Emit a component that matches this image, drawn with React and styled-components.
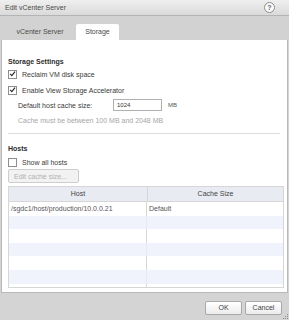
import React from "react";
import styled, { createGlobalStyle } from "styled-components";

const GlobalStyle = createGlobalStyle`
  html, body {
    margin: 0;
    padding: 0;
    background: #d4d4d4;
  }
  body {
    font-family: "Liberation Sans", Arial, sans-serif;
    font-size: 7px;
    color: #3a3a3a;
  }
`;

const rows = [
  { host: "/sgdc1/host/production/10.0.0.21", size: "Default" },
  {},
  {},
  {},
  {},
  {},
  {},
];

const Check = ({ checked }) => (
  <Box>
    {checked ? (
      <svg width="8" height="8" viewBox="0 0 8 8">
        <path d="M1.3 3.8 L3.2 5.9 L6.9 1.2" fill="none" stroke="#2b2b2b" strokeWidth="1.3" />
      </svg>
    ) : null}
  </Box>
);

const App = () => {
  return (
    <>
      <GlobalStyle />
      <Dialog>
        <TitleBar>
          <span>Edit vCenter Server</span>
          <Help>?</Help>
        </TitleBar>
        <Tabs>
          <Tab>vCenter Server</Tab>
          <Tab active>Storage</Tab>
        </Tabs>
        <Panel>
          <Heading>Storage Settings</Heading>
          <CheckRow top={1}>
            <Check checked />
            <span>Reclaim VM disk space</span>
          </CheckRow>
          <CheckRow top={4}>
            <Check checked />
            <span>Enable View Storage Accelerator</span>
          </CheckRow>
          <FieldRow>
            <Label>Default host cache size:</Label>
            <Input>1024</Input>
            <Unit>MB</Unit>
          </FieldRow>
          <Note>Cache must be between 100 MB and 2048 MB</Note>
          <Rule />
          <Heading>Hosts</Heading>
          <CheckRow top={2}>
            <Check />
            <span>Show all hosts</span>
          </CheckRow>
          <Disabled>Edit cache size...</Disabled>
          <Table>
            <HeadRow>
              <HeadCell>Host</HeadCell>
              <HeadCell>Cache Size</HeadCell>
            </HeadRow>
            <Body>
              {rows.map((r, i) => (
                <Row key={i} striped={i % 2 === 1}>
                  <Cell>{r.host}</Cell>
                  <Cell>{r.size}</Cell>
                </Row>
              ))}
            </Body>
          </Table>
        </Panel>
        <Footer>
          <Button>OK</Button>
          <Button>Cancel</Button>
          <Grip>
            <svg width="5" height="5" viewBox="0 0 5 5">
              <rect x="4" y="0" width="1" height="1" fill="#8a8a8a" />
              <rect x="2" y="2" width="1" height="1" fill="#8a8a8a" />
              <rect x="4" y="2" width="1" height="1" fill="#8a8a8a" />
              <rect x="0" y="4" width="1" height="1" fill="#8a8a8a" />
              <rect x="2" y="4" width="1" height="1" fill="#8a8a8a" />
              <rect x="4" y="4" width="1" height="1" fill="#8a8a8a" />
            </svg>
          </Grip>
        </Footer>
      </Dialog>
    </>
  );
};

export default App;

const Dialog = styled.div`
  width: 289px;
  height: 320px;
  display: flex;
  flex-direction: column;
  background: #d4d4d4;
  position: relative;
`;

const TitleBar = styled.div`
  height: 15px;
  border-bottom: 1px solid #b4b4b4;
  background: linear-gradient(#efefef, #dadada);
  display: flex;
  align-items: center;
  justify-content: space-between;
  padding: 0 14px 0 5px;
  color: #4a4a4a;
`;

const Help = styled.div`
  width: 9px;
  height: 9px;
  border-radius: 50%;
  border: 1px solid #8c8c8c;
  background: #fafafa;
  font-size: 7px;
  font-weight: bold;
  line-height: 9px;
  text-align: center;
  color: #666;
`;

const Tabs = styled.div`
  height: 24px;
  background: #d2d2d2;
  display: flex;
  align-items: flex-end;
  padding-left: 6px;
  box-sizing: border-box;
`;

const Tab = styled.div`
  height: 16px;
  line-height: 16px;
  padding: 0 ${(p) => (p.active ? "8px" : "8px")};
  margin-right: ${(p) => (p.active ? "0" : "2px")};
  background: ${(p) => (p.active ? "#ffffff" : "transparent")};
  border-radius: 2px 2px 0 0;
  color: #4a4a4a;
  width: ${(p) => (p.active ? "27px" : "52px")};
  text-align: center;
`;

const Panel = styled.div`
  height: 253px;
  background: #ffffff;
  border: 1px solid #b9b9b9;
  border-top: none;
  margin: 0 1px 0 1px;
  padding: 17px 5px 0 6px;
  box-sizing: border-box;
  display: flex;
  flex-direction: column;
`;

const Heading = styled.div`
  height: 10px;
  line-height: 10px;
  font-weight: bold;
  color: #2e2e2e;
`;

const CheckRow = styled.div`
  display: flex;
  align-items: center;
  gap: 5px;
  height: 12px;
  margin-top: ${(p) => p.top}px;
`;

const Box = styled.div`
  width: 7px;
  height: 7px;
  border: 1px solid #8e8e8e;
  background: #fff;
  display: flex;
  align-items: center;
  justify-content: center;
`;

const FieldRow = styled.div`
  display: flex;
  align-items: center;
  height: 12px;
  margin-top: 3px;
  padding-left: 10px;
`;

const Label = styled.div`
  width: 95px;
`;

const Input = styled.div`
  width: 44px;
  height: 10px;
  border: 1px solid #b0b0b0;
  padding-left: 3px;
  font-size: 6px;
  line-height: 10px;
  color: #333;
`;

const Unit = styled.div`
  margin-left: 6px;
  font-size: 6px;
  color: #555;
`;

const Note = styled.div`
  height: 12px;
  line-height: 12px;
  margin-top: 4px;
  padding-left: 10px;
  color: #a6a6a6;
`;

const Rule = styled.div`
  height: 1px;
  background: #dcdcdc;
  margin: 6px 2px 10px 0;
`;

const Disabled = styled.div`
  width: 69px;
  height: 13px;
  line-height: 13px;
  margin-top: 1px;
  border: 1px solid #cdcdcd;
  border-radius: 2px;
  background: #f2f2f2;
  color: #b0b0b0;
  padding-left: 5px;
  box-sizing: border-box;
  width: 71px;
  height: 14px;
`;

const Table = styled.div`
  margin-top: 3px;
  width: 276px;
  height: 102px;
  border: 1px solid #d6d6d6;
  box-sizing: border-box;
  display: flex;
  flex-direction: column;
`;

const HeadRow = styled.div`
  display: grid;
  grid-template-columns: 138px 1fr;
  height: 14px;
  background: #e9ebf2;
  border-bottom: 1px solid #d6d6d6;
`;

const HeadCell = styled.div`
  text-align: center;
  line-height: 14px;
  color: #444;
  & + & {
    border-left: 1px solid #d6d6d6;
  }
`;

const Body = styled.div`
  flex: 1;
  overflow: hidden;
  display: grid;
  grid-template-columns: 1fr;
  grid-auto-rows: 13.6px;
  background: linear-gradient(to right, transparent 137px, #d6d6d6 137px, #d6d6d6 138px, transparent 138px);
`;

const Row = styled.div`
  display: grid;
  grid-template-columns: 138px 1fr;
  background: ${(p) => (p.striped ? "rgba(236, 240, 251, 0.8)" : "transparent")};
`;

const Cell = styled.div`
  line-height: 13px;
  padding-left: 2px;
  color: #555;
  white-space: nowrap;
  overflow: hidden;
`;

const Footer = styled.div`
  flex: 1;
  display: flex;
  justify-content: flex-end;
  align-items: flex-start;
  gap: 3px;
  padding: 8px 7px 0 0;
`;

const Button = styled.div`
  width: 37px;
  height: 14px;
  box-sizing: border-box;
  border: 1px solid #a9a9a9;
  border-radius: 2px;
  background: linear-gradient(#ffffff, #ececec);
  text-align: center;
  line-height: 12px;
  color: #444;
`;

const Grip = styled.div`
  position: absolute;
  right: 1px;
  bottom: 1px;
  line-height: 0;
`;
